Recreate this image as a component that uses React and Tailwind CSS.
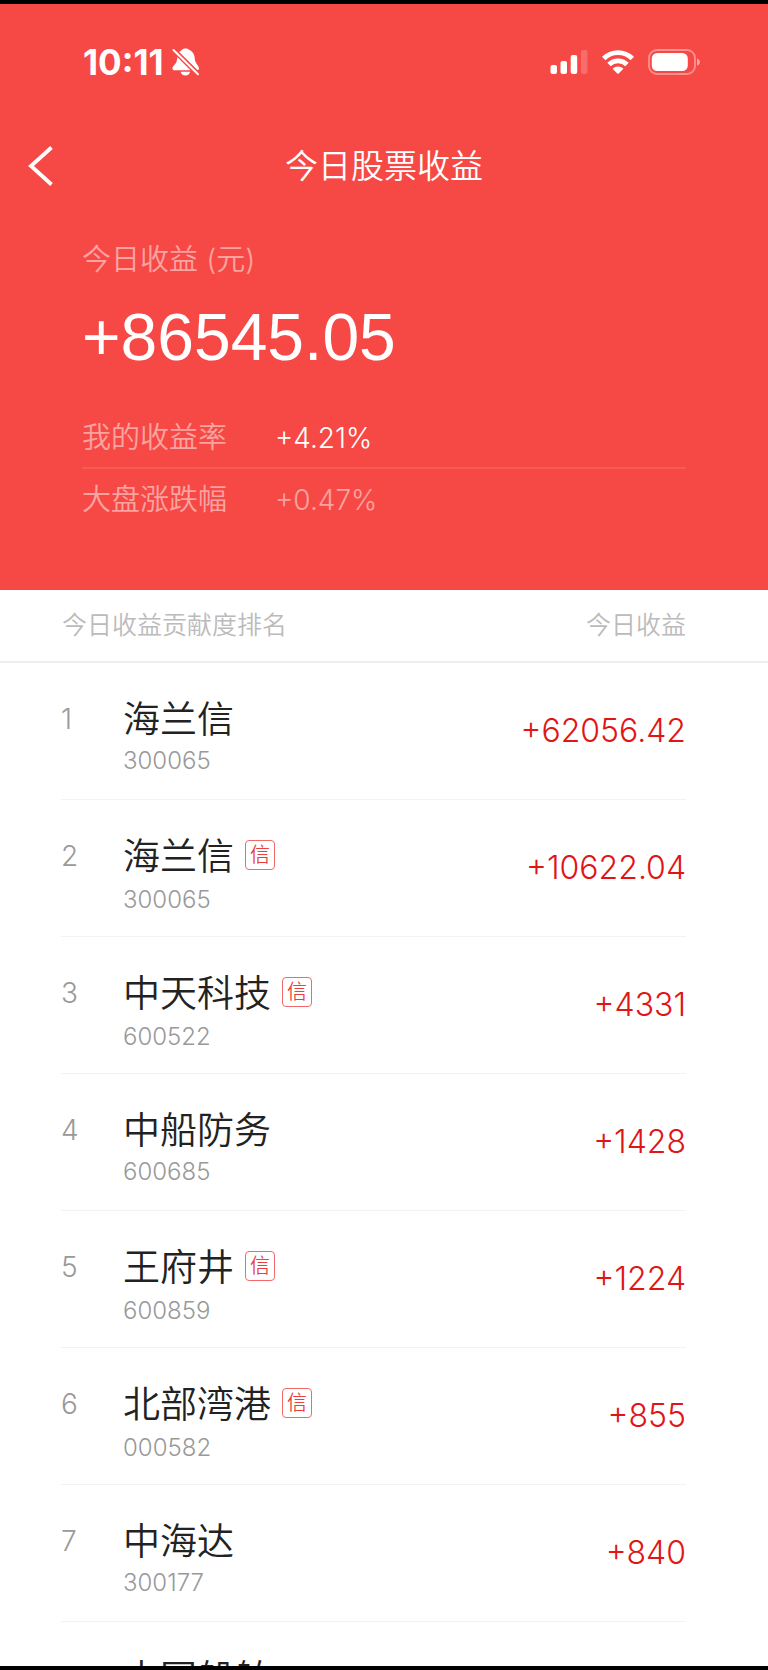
import React from "react";

const stocks = [
  { rank: 1, name: "海兰信", code: "300065", profit: "+62056.42" },
  { rank: 2, name: "海兰信", code: "300065", profit: "+10622.04", margin: true },
  { rank: 3, name: "中天科技", code: "600522", profit: "+4331", margin: true },
  { rank: 4, name: "中船防务", code: "600685", profit: "+1428" },
  { rank: 5, name: "王府井", code: "600859", profit: "+1224", margin: true },
  { rank: 6, name: "北部湾港", code: "000582", profit: "+855", margin: true },
  { rank: 7, name: "中海达", code: "300177", profit: "+840" },
  { rank: 8, name: "中国船舶", code: "", profit: "" },
];

const StatusBar = () => (
  <div className="flex h-[116px] items-center justify-between pl-[83px] pr-[67px] text-white">
    <div className="flex items-center gap-2">
      <span className="text-[35px] leading-10 font-bold">10:11</span>
      <svg width="28" height="28" viewBox="0 0 28 28" fill="currentColor">
        <path d="M6 5.200C7.500 3.500 9 2.800 10 1.800C11.500 -.1 15.500 -.1 17 1.800C20 3 22.500 6 22.700 10C22.900 13.500 24 15 25.500 17C27 19 27.300 20.500 26.500 22H23L6 5.200Z" />
        <path d="M5.500 9L18.700 22.300H2.300C.3 22.300 0 20 1.200 18.300C3 16 4.500 15 4.800 12.500Z" />
        <path d="M8.700 23.800H18C17.700 26 16 27.500 13.400 27.500S9 26 8.700 23.800Z" />
        <path d="M2 2.200L26 26" stroke="#f64945" strokeWidth="4.800" />
        <path d="M1.500 2L26 26.200" stroke="currentColor" strokeWidth="2" strokeLinecap="round" />
      </svg>
    </div>
    <div className="flex items-center gap-3.5">
      <svg width="38" height="24" viewBox="0 0 38 24" fill="currentColor">
        <rect x="0.500" y="15" width="6.500" height="9" rx="2" />
        <rect x="10.500" y="11" width="6.500" height="13" rx="2" />
        <rect x="20.700" y="5" width="6.500" height="19" rx="2" />
        <rect x="31" y="0" width="6.500" height="24" rx="2" opacity="0.2" />
      </svg>
      <svg width="32" height="24" viewBox="0 0 32 24" fill="none" stroke="currentColor" strokeWidth="4.800">
        <path d="M1.700 8.500C9.500 .6 22.500 .6 30.300 8.500" />
        <path d="M7 14.500C12 9.600 20 9.600 25 14.500" />
        <path d="M10.600 18.700C13.600 15.600 18.400 15.600 21.400 18.700L16.700 23.400Q16 24 15.300 23.400Z" fill="currentColor" stroke="none" />
      </svg>
      <svg width="53" height="26" viewBox="0 0 53 26">
        <rect x="1" y="1" width="46" height="24" rx="8" fill="none" stroke="white" strokeOpacity="0.400" strokeWidth="1.800" />
        <rect x="3.800" y="4" width="36" height="18" rx="5.500" fill="white" />
        <path d="M49 9.500C52.800 10.500 52.800 15.500 49 16.500Z" fill="white" fillOpacity="0.500" />
      </svg>
    </div>
  </div>
);

const StockRow = ({ rank, name, code, profit, margin }) => (
  <tr className="align-top">
    <td className="w-[123px] pl-[61px]">
      <div className="h-[137px] border-b border-[#f3f3f3] pt-9 text-[28px] leading-10 text-[#999]">
        {code && rank}
      </div>
    </td>
    <td>
      <div className="h-[137px] border-b border-[#f3f3f3] pt-8">
        <div className="flex h-[46px] items-center gap-[11px]">
          <span className="pt-1 text-[37px] leading-[46px] text-[#222]">{name}</span>
          {margin && (
            <span className="flex h-[30px] w-[30px] items-center justify-center rounded border border-[#f06a68] text-[20px] leading-none text-[#e8403e]">
              信
            </span>
          )}
        </div>
        <p className={`text-[24px] leading-7 text-[#999] ${margin ? "mt-2" : "mt-1.5"}`}>{code}</p>
      </div>
    </td>
    <td className="pr-[82px] text-right">
      <div className="h-[137px] border-b border-[#f3f3f3] text-[32px] leading-[136px] text-[#e01515]">
        {profit}
      </div>
    </td>
  </tr>
);

const App = () => {
  return (
    <div className="flex h-screen flex-col overflow-hidden border-y-4 border-black bg-white font-['Inter','Noto_Sans_CJK_SC',sans-serif] font-[350]">
      <header className="shrink-0 bg-[#f64945] pb-[61px]">
        <StatusBar />

        {/* Title bar */}
        <div className="grid h-[92px] grid-cols-[80px_1fr_80px] items-center text-white">
          <button aria-label="返回" className="flex h-full items-center pl-7">
            <svg width="26" height="40" viewBox="0 0 26 40" fill="none" stroke="currentColor" strokeWidth="3.800">
              <path d="M23.500 1.500L3 20L23.500 38.500" />
            </svg>
          </button>
          <h1 className="text-center text-[33px] leading-10 font-[350]">今日股票收益</h1>
        </div>

        {/* Today's summary */}
        <section className="px-[82px] pt-7 text-[29px]">
          <p className="leading-10 text-white/50">今日收益 (元)</p>
          <p className="mt-5 mb-[33px] font-['Liberation_Sans',sans-serif] text-[66px] leading-[74px] text-white">
            +86545.05
          </p>
          <div className="flex h-[62px] items-center border-b-2 border-white/10 pt-0.5">
            <span className="w-[193px] text-white/50">我的收益率</span>
            <span className="text-[28px] text-white">+4.21%</span>
          </div>
          <div className="flex h-[60px] items-center pt-0.5 text-white/50">
            <span className="w-[193px]">大盘涨跌幅</span>
            <span className="text-[28px]">+0.47%</span>
          </div>
        </section>
      </header>

      {/* Contribution ranking */}
      <main className="min-h-0 flex-1 overflow-hidden">
        <table className="w-full border-collapse">
          <thead>
            <tr className="h-[72px] border-b-2 border-[#eee] text-[25px] text-[#bbb]">
              <th colSpan={2} className="pl-[62px] text-left font-[350]">今日收益贡献度排名</th>
              <th className="pr-[82px] text-right font-[350]">今日收益</th>
            </tr>
          </thead>
          <tbody>
            {stocks.map((stock) => (
              <StockRow key={stock.rank} {...stock} />
            ))}
          </tbody>
        </table>
      </main>
    </div>
  );
};

export default App;
